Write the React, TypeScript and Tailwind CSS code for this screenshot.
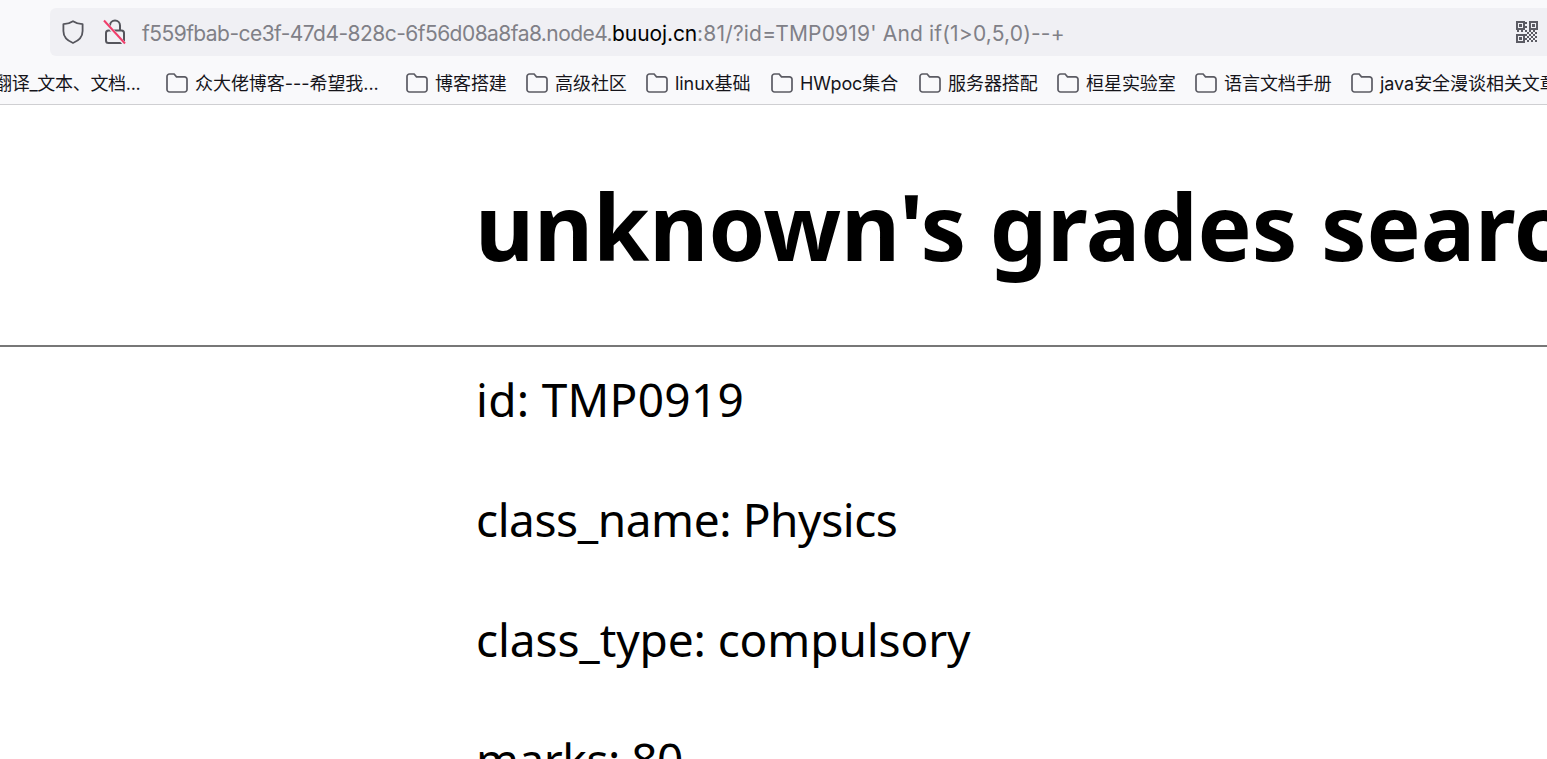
const cjk = "font-['Inter','Noto_Sans_CJK_SC',sans-serif]";

const bookmarks: { label: string; width: string }[] = [
  { label: "众大佬博客---希望我...", width: "w-[240px]" },
  { label: "博客搭建", width: "w-[120px]" },
  { label: "高级社区", width: "w-[120px]" },
  { label: "linux基础", width: "w-[125px]" },
  { label: "HWpoc集合", width: "w-[148px]" },
  { label: "服务器搭配", width: "w-[138px]" },
  { label: "桓星实验室", width: "w-[138px]" },
  { label: "语言文档手册", width: "w-[156px]" },
  { label: "java安全漫谈相关文章", width: "w-[230px]" },
];

function FolderIcon() {
  return (
    <svg width="22" height="22" viewBox="0 0 22 22" fill="none" className="shrink-0 text-[#5b5b63]">
      <path
        d="M1 4.5 a2.5 2.5 0 0 1 2.5-2.5 h4.6 l2.4 2.8 h8 a2.5 2.5 0 0 1 2.5 2.5 v10.2 a2.5 2.5 0 0 1-2.5 2.5 h-15 a2.5 2.5 0 0 1-2.5-2.5 z"
        stroke="currentColor"
        strokeWidth="1.7"
      />
    </svg>
  );
}

function ShieldIcon() {
  return (
    <svg width="24" height="26" viewBox="0 0 24 26" fill="none" className="text-[#55555c]">
      <path
        d="M12 2.2 C15 4.2 18 5 21.6 5.2 V12 C21.6 18 17.4 21.8 12 24 C6.6 21.8 2.4 18 2.4 12 V5.2 C6 5 9 4.2 12 2.2 Z"
        stroke="currentColor"
        strokeWidth="1.8"
        strokeLinejoin="round"
      />
    </svg>
  );
}

function BrokenLockIcon() {
  return (
    <svg width="24" height="26" viewBox="0 0 24 26" fill="none">
      <path d="M7 11 V6.5 a5 5 0 0 1 10 0 V11" stroke="#55555c" strokeWidth="2" />
      <rect x="3" y="11.5" width="18" height="12.5" rx="2.5" stroke="#55555c" strokeWidth="2" />
      <path d="M1.5 2.5 L21.5 25" stroke="#f0f0f4" strokeWidth="3.5" />
      <path d="M1 1.5 L22 24.5" stroke="#f03e6b" strokeWidth="2" />
    </svg>
  );
}

function QrIcon() {
  const dots = [
    [9, 1], [9, 5], [1, 9], [5, 9], [9, 9], [13, 9], [17, 9], [9, 13], [13, 13], [17, 13], [9, 17], [13, 17], [17, 17],
    [11, 11], [15, 11], [19, 11], [11, 15], [15, 15], [19, 15], [11, 19], [15, 19], [19, 19],
  ];
  return (
    <svg width="22" height="22" viewBox="0 0 22 22" fill="#5b5b63">
      <path fillRule="evenodd" d="M0 0h9v9H0z M2 2v5h5V2z" />
      <path d="M3 3h3v3H3z" />
      <path fillRule="evenodd" d="M13 0h9v9h-9z M15 2v5h5V2z" />
      <path d="M16 3h3v3h-3z" />
      <path fillRule="evenodd" d="M0 13h9v9H0z M2 15v5h5v-5z" />
      <path d="M3 16h3v3H3z" />
      {dots.map(([x, y]) => (
        <rect key={`${x}-${y}`} x={x} y={y} width="2" height="2" />
      ))}
    </svg>
  );
}

export default function App() {
  return (
    <div className="h-[759px] w-full overflow-hidden bg-white text-black">
      <div className={`h-[105px] border-b border-[#cfcfd2] bg-[#f9f9fb] ${cjk}`}>
        <div className="flex h-[56px] pl-[50px] pt-[8px]">
          <div className="flex h-[48px] flex-1 items-center rounded-l-[6px] bg-[#f0f0f4] pl-[11px] pr-[9px]">
            <ShieldIcon />
            <div className="ml-[18px]">
              <BrokenLockIcon />
            </div>
            <div className="ml-[15px] mt-[3px] whitespace-nowrap text-[21px] text-[#808087]">
              <span className="tracking-[-0.55px]">f559fbab-ce3f-47d4-828c-6f56d08a8fa8.node4.</span>
              <span className="tracking-[-0.1px] text-black">buuoj.cn</span>
              <span className="tracking-[0.17px]">:81/?id=TMP0919' And if(1&gt;0,5,0)--+</span>
            </div>
            <div className="ml-auto">
              <QrIcon />
            </div>
          </div>
        </div>
        <div className="flex h-[48px] items-center overflow-hidden whitespace-nowrap pt-[6px] text-[18px] text-[#15141a]">
          <div className="-ml-[6px] w-[165px] shrink-0 tracking-[-0.3px]">翻译_文本、文档...</div>
          <div className="ml-[7px] flex">
            {bookmarks.map((b) => (
              <div key={b.label} className={`flex shrink-0 items-center gap-[7px] ${b.width}`}>
                <FolderIcon />
                <span className="tracking-[-0.05px]">{b.label}</span>
              </div>
            ))}
          </div>
        </div>
      </div>
      <div className="font-['Noto_Sans','Noto_Sans_CJK_SC',sans-serif]">
        <div className="h-[240px] overflow-hidden whitespace-nowrap pl-[475px]">
          <h1 className="pt-[57px] text-[91px] font-bold leading-[128px] tracking-[-0.12px]">unknown's grades search</h1>
        </div>
        <hr className="border-t-[2px] border-[#777]" />
        <div className="flex flex-col gap-[48px] pl-[476px] pt-[16px] text-[46px] leading-[72px]">
          <p className="tracking-[0.3px]">id: TMP0919</p>
          <p className="tracking-[-0.42px]">class_name: Physics</p>
          <p className="tracking-[-0.1px]">class_type: compulsory</p>
          <p className="tracking-[-0.5px]">marks: 80</p>
        </div>
      </div>
    </div>
  );
}
